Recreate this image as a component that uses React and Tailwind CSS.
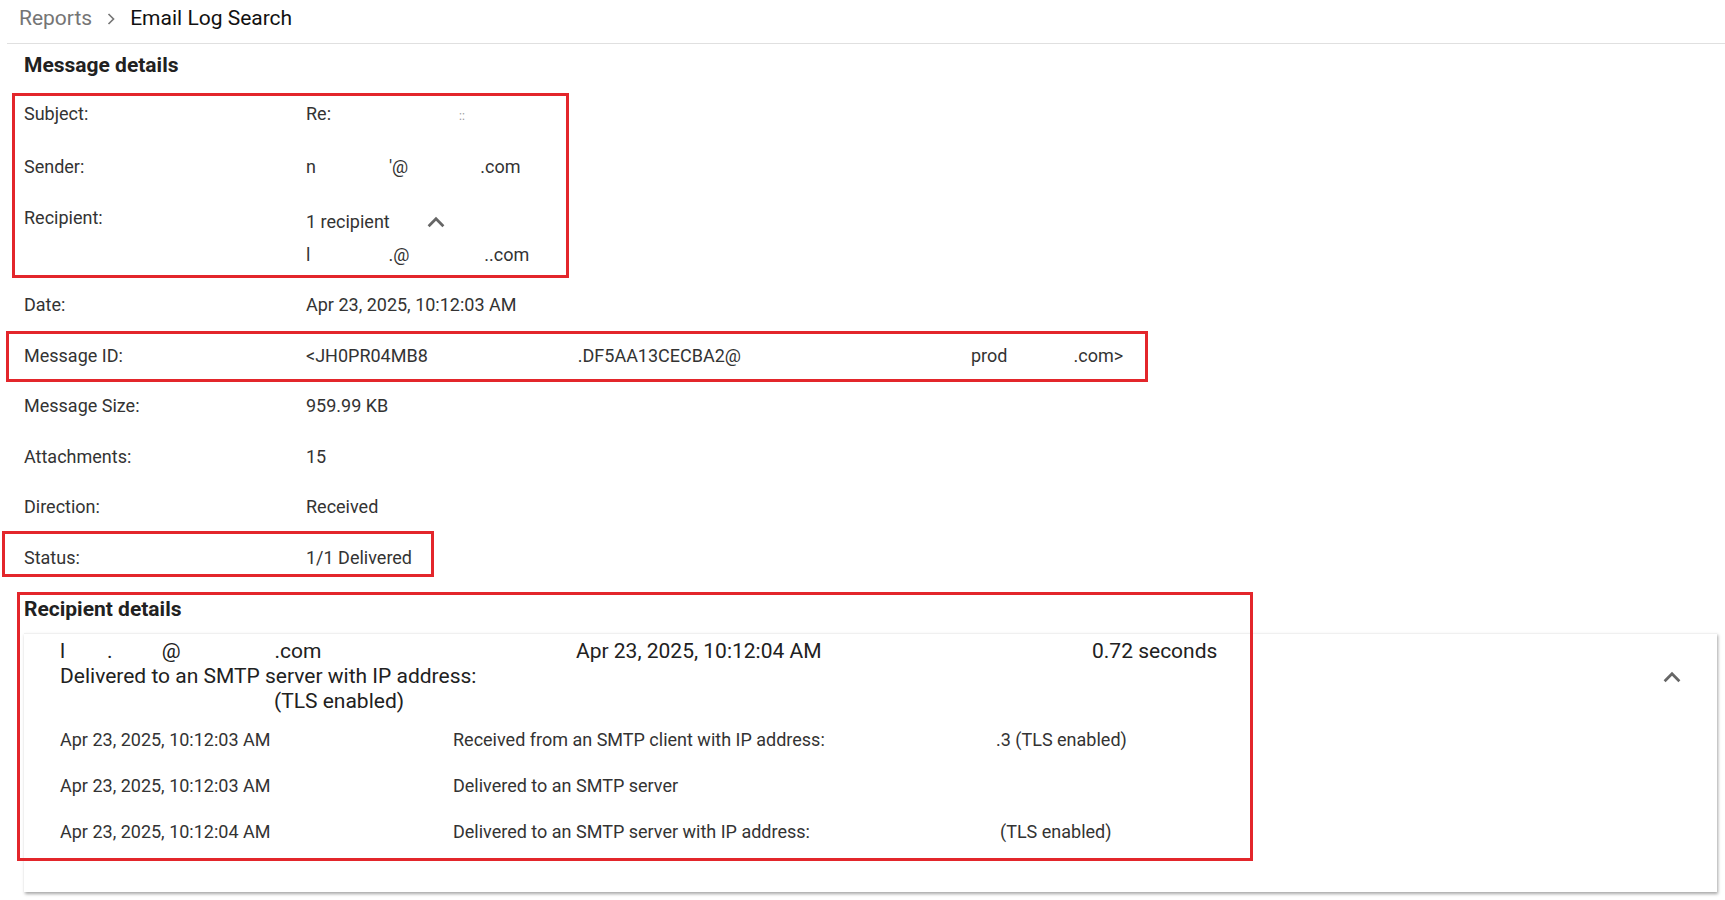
import React from "react";

const rows = [
  { label: "Date:", value: "Apr 23, 2025, 10:12:03 AM" },
  { label: "Message ID:", value: "id" },
  { label: "Message Size:", value: "959.99 KB" },
  { label: "Attachments:", value: "15" },
  { label: "Direction:", value: "Received" },
  { label: "Status:", value: "1/1 Delivered" },
];

const events = [
  { time: "Apr 23, 2025, 10:12:03 AM", desc: "Received from an SMTP client with IP address:", extra: ".3 (TLS enabled)", pad: "pl-0" },
  { time: "Apr 23, 2025, 10:12:03 AM", desc: "Delivered to an SMTP server", extra: "", pad: "pl-0" },
  { time: "Apr 23, 2025, 10:12:04 AM", desc: "Delivered to an SMTP server with IP address:", extra: "(TLS enabled)", pad: "pl-[4px]" },
];

function ChevronUp({ className }) {
  return (
    <svg viewBox="0 0 24 24" className={className} fill="none" stroke="currentColor" strokeWidth="3" strokeLinecap="square">
      <path d="M5 15.5l7-7 7 7" />
    </svg>
  );
}

function Row({ label, children }) {
  return (
    <div className="flex py-[13px] leading-[24.5px]">
      <div className="w-[282px] shrink-0">{label}</div>
      <div>{children}</div>
    </div>
  );
}

function RedBox({ className }) {
  return <div className={`absolute border-[3px] border-[#e3262b] pointer-events-none ${className}`} />;
}

export default function App() {
  return (
    <div className="relative min-h-[900px] bg-white text-[#212121] font-['Roboto',sans-serif]">
      {/* breadcrumb */}
      <div className="h-[44px] ml-[7px] flex items-center pb-[6px] pl-[12px] text-[21px] border-b border-[#e0e0e0]">
        <span className="text-[#757575]">Reports</span>
        <svg viewBox="0 0 24 24" className="w-[20px] h-[20px] mx-[9px] text-[#757575]" fill="none" stroke="currentColor" strokeWidth="2">
          <path d="M9 6l6 6-6 6" />
        </svg>
        <span className="text-[#111]">Email Log Search</span>
      </div>

      <div className="pl-[24px] text-[18px] text-[#333]">
        <div className="h-[45px] flex items-center pb-[2px] text-[21px] font-bold text-[#212121]">Message details</div>

        <Row label="Subject:">
          <span>Re:</span>
          <span className="ml-[128px] text-[#999] text-[12px]">::</span>
        </Row>
        <Row label="Sender:">
          <span>n</span>
          <span className="ml-[73px]">'@</span>
          <span className="ml-[72px]">.com</span>
        </Row>
        <div className="flex pt-[13px] pb-[13px]">
          <div className="w-[282px] shrink-0 leading-[25px]">Recipient:</div>
          <div>
            <div className="flex items-center h-[33px]">
              <span>1 recipient</span>
              <ChevronUp className="w-[22px] h-[22px] ml-[35px] text-[#666]" />
            </div>
            <div className="mt-[4px] leading-[25px]">
              <span>l</span>
              <span className="ml-[78px]">.@</span>
              <span className="ml-[75px]">..com</span>
            </div>
          </div>
        </div>

        {rows.map((r) => (
          <Row key={r.label} label={r.label}>
            {r.value === "id" ? (
              <span>
                <span>&lt;JH0PR04MB8</span>
                <span className="ml-[150px]">.DF5AA13CECBA2@</span>
                <span className="ml-[230px]">prod</span>
                <span className="ml-[66px]">.com&gt;</span>
              </span>
            ) : (
              r.value
            )}
          </Row>
        ))}

        <div className="h-[50px] flex items-center pt-[4px] text-[21px] font-bold text-[#212121]">Recipient details</div>
      </div>

      {/* recipient card */}
      <div className="ml-[24px] w-[1693px] h-[259px] bg-white border-t border-[#f0f0f0] shadow-[1px_2px_3px_rgba(0,0,0,0.35)] pl-[36px] pt-[5px] text-[#212121]">
        <div className="flex items-start">
          <div className="w-[1548px] text-[21px] leading-[25px]">
            <div className="grid grid-cols-3">
              <div>
                <span>l</span>
                <span className="ml-[42px]">.</span>
                <span className="ml-[49px]">@</span>
                <span className="ml-[94px]">.com</span>
              </div>
              <div>Apr 23, 2025, 10:12:04 AM</div>
              <div>0.72 seconds</div>
            </div>
            <div>Delivered to an SMTP server with IP address:</div>
            <div className="pl-[214px]">(TLS enabled)</div>
          </div>
          <ChevronUp className="w-[22px] h-[22px] mt-[27px] ml-[53px] text-[#666]" />
        </div>

        <div className="mt-[2px] text-[18px] text-[#333]">
          {events.map((e, i) => (
            <div key={i} className="flex h-[46px] items-center">
              <div className="w-[393px] shrink-0">{e.time}</div>
              <div className="w-[543px] shrink-0">{e.desc}</div>
              <div className={e.pad}>{e.extra}</div>
            </div>
          ))}
        </div>
      </div>

      {/* annotation boxes */}
      <RedBox className="left-[12px] top-[93px] w-[557px] h-[185px]" />
      <RedBox className="left-[6px] top-[331px] w-[1142px] h-[51px]" />
      <RedBox className="left-[2px] top-[531px] w-[432px] h-[46px]" />
      <RedBox className="left-[17px] top-[592px] w-[1236px] h-[269px]" />
    </div>
  );
}
